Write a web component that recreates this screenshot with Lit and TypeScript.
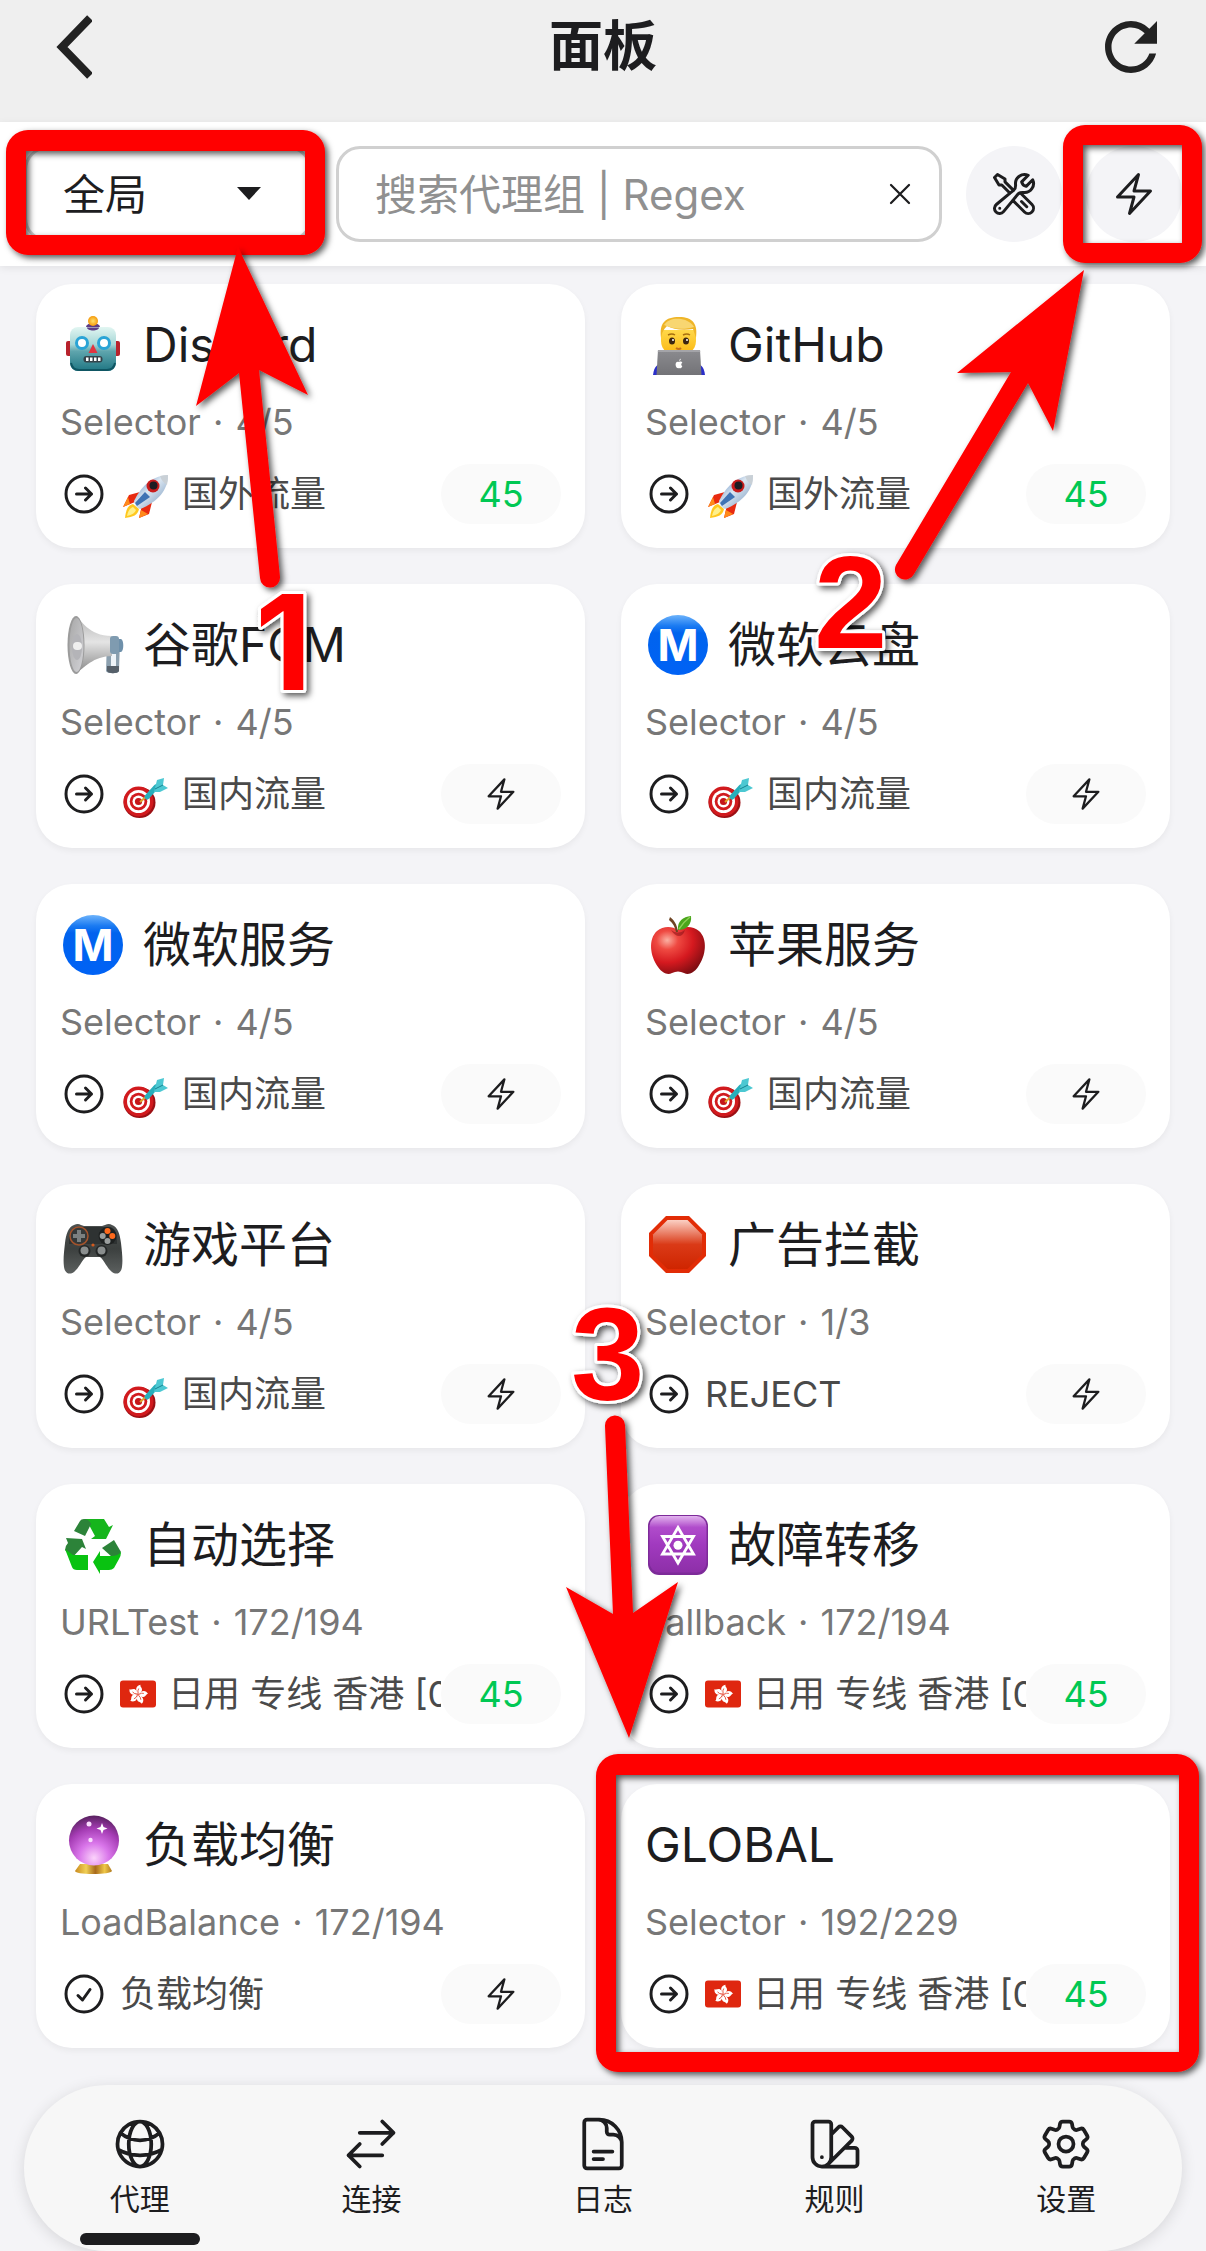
import { LitElement, html, svg, css, nothing, type TemplateResult } from "lit";
import { customElement, property } from "lit/decorators.js";

type Glyph = TemplateResult | typeof nothing;

/* ---------- outline icons, 24-unit grid ---------- */

const PATHS: Record<string, string> = {
  bolt: "m3.75 13.5 10.5-11.25L12 10.5h8.25L9.75 21.75 12 13.5H3.75Z",
  close: "M6 18 18 6M6 6l12 12",
  arrow: "m12.75 15 3-3m0 0-3-3m3 3h-7.5M21 12a9 9 0 1 1-18 0 9 9 0 0 1 18 0Z",
  check: "M9 12.75 11.25 15 15 9.75M21 12a9 9 0 1 1-18 0 9 9 0 0 1 18 0Z",
  tools:
    "M11.42 15.17 17.25 21A2.652 2.652 0 0 0 21 17.25l-5.877-5.877M11.42 15.17l2.496-3.03c.317-.384.74-.626 1.208-.766M11.42 15.17l-4.655 5.653a2.548 2.548 0 1 1-3.586-3.586l6.837-5.63m5.108-.233c.55-.164 1.163-.188 1.743-.14a4.5 4.5 0 0 0 4.486-6.336l-3.276 3.277a3.004 3.004 0 0 1-2.25-2.25l3.276-3.276a4.5 4.5 0 0 0-6.336 4.486c.091 1.076-.071 2.264-.904 2.95l-.102.085m-1.745 1.437L5.909 7.5H4.5L2.25 3.75l1.5-1.5L7.5 4.5v1.409l4.26 4.26m-1.745 1.437 1.745-1.437m6.615 8.206L15.75 15.75M4.867 19.125h.008v.008h-.008v-.008Z",
  globe:
    "M12 21a9.004 9.004 0 0 0 8.716-6.747M12 21a9.004 9.004 0 0 1-8.716-6.747M12 21c2.485 0 4.5-4.03 4.5-9S14.485 3 12 3m0 18c-2.485 0-4.5-4.03-4.5-9S9.515 3 12 3m0 0a8.997 8.997 0 0 1 7.843 4.582M12 3a8.997 8.997 0 0 0-7.843 4.582m15.686 0A11.953 11.953 0 0 1 12 10.5c-2.998 0-5.74-1.1-7.843-2.918m15.686 0A8.959 8.959 0 0 1 21 12c0 .778-.099 1.533-.284 2.253m0 0A17.919 17.919 0 0 1 12 16.5c-3.162 0-6.133-.815-8.716-2.247m0 0A9.015 9.015 0 0 1 3 12c0-1.605.42-3.113 1.157-4.418",
  swap: "M7.5 21 3 16.5m0 0L7.5 12M3 16.5h13.5m0-13.5L21 7.5m0 0L16.5 12M21 7.5H7.5",
  log: "M19.5 14.25v-2.625a3.375 3.375 0 0 0-3.375-3.375h-1.5A1.125 1.125 0 0 1 13.5 7.125v-1.5a3.375 3.375 0 0 0-3.375-3.375H8.25m0 12.75h7.5m-7.5 3H12M10.5 2.25H5.625c-.621 0-1.125.504-1.125 1.125v17.25c0 .621.504 1.125 1.125 1.125h12.75c.621 0 1.125-.504 1.125-1.125V11.25a9 9 0 0 0-9-9Z",
  swatch:
    "M4.098 19.902a3.75 3.75 0 0 0 5.304 0l6.401-6.402M6.75 21A3.75 3.75 0 0 1 3 17.25V4.125C3 3.504 3.504 3 4.125 3h5.25c.621 0 1.125.504 1.125 1.125v4.072M6.75 21a3.75 3.75 0 0 0 3.75-3.75V8.197M6.75 21h13.125c.621 0 1.125-.504 1.125-1.125v-5.25c0-.621-.504-1.125-1.125-1.125h-4.072M10.5 8.197l2.88-2.88c.438-.439 1.15-.439 1.59 0l3.712 3.713c.44.44.44 1.152 0 1.59l-2.879 2.88M6.75 17.25h.008v.008H6.75v-.008Z",
  cog: "M9.594 3.94c.09-.542.56-.94 1.11-.94h2.593c.55 0 1.02.398 1.11.94l.213 1.281c.063.374.313.686.645.87.074.04.147.083.22.127.325.196.72.257 1.075.124l1.217-.456a1.125 1.125 0 0 1 1.37.49l1.296 2.247a1.125 1.125 0 0 1-.26 1.431l-1.003.827c-.293.241-.438.613-.43.992a7.723 7.723 0 0 1 0 .255c-.008.378.137.75.43.991l1.004.827c.424.35.534.955.26 1.43l-1.298 2.247a1.125 1.125 0 0 1-1.369.491l-1.217-.456c-.355-.133-.75-.072-1.076.124a6.47 6.47 0 0 1-.22.128c-.331.183-.581.495-.644.869l-.213 1.281c-.09.543-.56.94-1.11.94h-2.594c-.55 0-1.019-.398-1.11-.94l-.213-1.281c-.062-.374-.312-.686-.644-.87a6.52 6.52 0 0 1-.22-.127c-.325-.196-.72-.257-1.076-.124l-1.217.456a1.125 1.125 0 0 1-1.369-.49l-1.297-2.247a1.125 1.125 0 0 1 .26-1.431l1.004-.827c.292-.24.437-.613.43-.991a6.932 6.932 0 0 1 0-.255c.007-.38-.138-.751-.43-.992l-1.004-.827a1.125 1.125 0 0 1-.26-1.43l1.297-2.247a1.125 1.125 0 0 1 1.37-.491l1.216.456c.356.133.751.072 1.076-.124.072-.044.146-.086.22-.128.332-.183.582-.495.644-.869l.214-1.28ZM15 12a3 3 0 1 1-6 0 3 3 0 0 1 6 0Z",
};

const line = (name: string, size: number) => html`<svg
  width=${size} height=${size} viewBox="0 0 24 24" fill="none" stroke="currentColor"
  stroke-width="1.5" stroke-linecap="round" stroke-linejoin="round" aria-hidden="true"
><path d=${PATHS[name]}></path></svg>`;

/* ---------- coloured glyphs in card titles, 66-unit grid ---------- */

const big = (content: unknown) =>
  html`<svg width="66" height="66" viewBox="0 0 66 66" aria-hidden="true">${content}</svg>`;

const robot = big(svg`
  <defs>
    <linearGradient id="rb" x1="0" y1="0" x2="0" y2="1">
      <stop offset="0" stop-color="#e2f6f2"></stop><stop offset=".4" stop-color="#a5d6d6"></stop>
      <stop offset=".55" stop-color="#5fa5ad"></stop><stop offset="1" stop-color="#1f7683"></stop>
    </linearGradient>
    <radialGradient id="ry"><stop offset="0" stop-color="#ffe06a"></stop><stop offset="1" stop-color="#f59a0c"></stop></radialGradient>
  </defs>
  <rect x="6" y="29" width="8" height="15" rx="2" fill="#b8222c"></rect>
  <rect x="52" y="29" width="8" height="15" rx="2" fill="#b8222c"></rect>
  <ellipse cx="33" cy="15" rx="7" ry="4" fill="#5c3c86"></ellipse>
  <circle cx="33" cy="9" r="5" fill="url(#ry)"></circle>
  <rect x="10" y="15" width="46" height="44" rx="8" fill="url(#rb)"></rect>
  <path d="M27 15.500h12c0 4-12 4-12 0Z" fill="#5c3c86"></path>
  <path d="M11 51c1 5 4 7 8 7h28c4 0 7-2 8-7" fill="none" stroke="#0f5663" stroke-width="2"></path>
  <circle cx="22" cy="31" r="5.500" fill="#fff" stroke="#2aa4d6" stroke-width="3"></circle>
  <circle cx="44" cy="31" r="5.500" fill="#fff" stroke="#2aa4d6" stroke-width="3"></circle>
  <path d="M33 32l4.500 9h-9Z" fill="#e2343f"></path>
  <rect x="23.500" y="44" width="19" height="6.500" rx="3" fill="#34434a"></rect>
  <path d="M26 45.500h2.500v3.500H26zM30 45.500h2.500v3.500H30zM34 45.500h2.500v3.500H34zM38 45.500h2.500v3.500H38z" fill="#fff"></path>`);

const coder = big(svg`
  <defs>
    <linearGradient id="cs" x1="0" y1="0" x2="0" y2="1"><stop offset="0" stop-color="#ffd84a"></stop><stop offset="1" stop-color="#fbb60d"></stop></linearGradient>
    <linearGradient id="cl" x1="0" y1="0" x2="0" y2="1"><stop offset="0" stop-color="#8b8b8f"></stop><stop offset="1" stop-color="#737377"></stop></linearGradient>
  </defs>
  <path d="M8 63c1-9 5-12 12-12h28c7 0 11 3 12 12Z" fill="#2b2fc9"></path>
  <rect x="26" y="36" width="16" height="12" fill="#eda30f"></rect>
  <path d="M16 18h35v11c0 9-8 15-17.500 15S16 38 16 29Z" fill="url(#cs)"></path>
  <path d="M16 26C14 11 20 5 34 5s19 7 17 21l-3-9c-11 2-20 0-26-3-3 3-5 6-6 12Z" fill="#efb528"></path>
  <path d="M19 13C23 7 30 6 36 7s11 4 13 8c-10 3-22 2-30-2Z" fill="#f8d671"></path>
  <ellipse cx="27" cy="29" rx="3" ry="3.500" fill="#3c2611"></ellipse><ellipse cx="41" cy="29" rx="3" ry="3.500" fill="#3c2611"></ellipse>
  <circle cx="28" cy="28" r="1" fill="#fff"></circle><circle cx="42" cy="28" r="1" fill="#fff"></circle>
  <path d="M23 23q4-2 7 0M38 23q4-2 7 0" stroke="#a8700f" stroke-width="1.500" fill="none"></path>
  <path d="M31 36q3 2 5 0" stroke="#c4701c" stroke-width="2" fill="none"></path>
  <path d="M13 38h42l1.500 25h-45Z" fill="url(#cl)"></path>
  <path d="M13 38h42l.2 2H12.800Z" fill="#a4a4a8"></path>
  <path d="M34 50c2-1 3 0 3.300.7-1.500 1-1.300 2.800 0 3.500-.8 2-2 2.500-3.300 1.800-1.300.7-2.500-.2-3.200-2-.8-3 .8-5 3.200-4ZM34 49q.2-2 2-2.500-.2 2-2 2.500Z" fill="#fff"></path>`);

const megaphone = big(svg`
  <defs>
    <linearGradient id="mg" x1="0" y1="0" x2="0" y2="1"><stop offset="0" stop-color="#b4b4b4"></stop><stop offset=".45" stop-color="#e4e4e4"></stop><stop offset="1" stop-color="#858585"></stop></linearGradient>
    <linearGradient id="mi" x1="0" y1="0" x2="1" y2="1"><stop offset="0" stop-color="#a8a8a8"></stop><stop offset="1" stop-color="#d2d2d6"></stop></linearGradient>
  </defs>
  <path d="M47 27h13l-1 32c-1 3-12 3-13 0Z" fill="#8ca0af"></path>
  <path d="M51 32h5v22h-5Z" fill="#eef4f9"></path>
  <path d="M47 54h12v5c-1 3-11 3-12 0Z" fill="#56606a"></path>
  <path d="M57 27h4c3 1 3 12 0 13h-4Z" fill="#6e90aa"></path>
  <path d="M16 4c5 3 12 20 36 20v20C34 44 23 56 16 62Z" fill="url(#mg)"></path>
  <rect x="50" y="24" width="9" height="18" rx="3" fill="#7f9bb0"></rect>
  <ellipse cx="16" cy="33" rx="8.500" ry="29" fill="#9b9b9b"></ellipse>
  <ellipse cx="16.500" cy="33" rx="7" ry="27" fill="url(#mi)"></ellipse>
  <ellipse cx="17" cy="35" rx="5" ry="13" fill="#b4b4b8"></ellipse>
  <rect x="13" y="30" width="9" height="8" rx="4" fill="#efefef"></rect>`);

const metro = big(svg`
  <defs><linearGradient id="mt" x1="0" y1="0" x2="0" y2="1"><stop offset="0" stop-color="#6db3fb"></stop><stop offset=".18" stop-color="#1b7bf2"></stop><stop offset=".3" stop-color="#0063ee"></stop><stop offset="1" stop-color="#0062f5"></stop></linearGradient></defs>
  <circle cx="33" cy="33" r="30" fill="url(#mt)"></circle>
  <text x="33" y="49" class="metro" text-anchor="middle">M</text>`);

const apple = big(svg`
  <defs><radialGradient id="ap" cx=".3" cy=".28" r=".8"><stop offset="0" stop-color="#fbb0a2"></stop><stop offset=".25" stop-color="#ef4a42"></stop><stop offset=".6" stop-color="#d5191f"></stop><stop offset="1" stop-color="#7e0d12"></stop></radialGradient></defs>
  <path d="M33 18c6-4 15-4 21 1 9 8 7 25-1 36-5 7-10 8-14 6-4-2-8-2-12 0-4 2-9 1-14-6C5 44 3 27 12 19c6-5 15-5 21-1Z" fill="url(#ap)"></path>
  <path d="M26 18q7 5 14 0-2 6-6 6t-8-6Z" fill="#8b1017" opacity=".55"></path>
  <path d="M33 20C32 12 29 8 25 5l-1 3c4 3 6 7 7 12Z" fill="#6f4423"></path>
  <path d="M33 18C32 9 38 5 46 4c1 8-4 14-13 14Z" fill="#4aa61c"></path>
  <path d="M34 17C38 11 41 8 45 5" stroke="#8ed054" stroke-width="1.500" fill="none"></path>`);

const gamepad = big(svg`
  <defs><linearGradient id="gp" x1="0" y1="0" x2="0" y2="1"><stop offset="0" stop-color="#4d5150"></stop><stop offset=".5" stop-color="#3c403f"></stop><stop offset="1" stop-color="#5c605f"></stop></linearGradient></defs>
  <path d="M14 13q4-2 7 0l3 1h18l3-1q4-2 7 0c6 2 8 10 9 18 1 9 2 17 1 24-1 7-6 8-10 5-5-4-8-12-12-15H26c-4 3-7 11-12 15-4 3-9 2-10-5-1-7 0-15 1-24 1-8 3-16 9-18Z" fill="url(#gp)"></path>
  <path d="M16 15h34c6 1 7 9 7 17H9c0-8 1-16 7-17Z" fill="#2e3232"></path>
  <circle cx="19" cy="24" r="9" fill="#343838" stroke="#a3532c" stroke-width="1.500"></circle>
  <path d="M17 18h4v4h4v4h-4v4h-4v-4h-4v-4h4Z" fill="#7b8080"></path>
  <circle cx="47.500" cy="24" r="9" fill="#1e2121"></circle>
  <circle cx="47.500" cy="19" r="3" fill="#ff6a1c"></circle><circle cx="52.300" cy="24" r="3" fill="#ff6a1c"></circle>
  <circle cx="42.700" cy="24" r="3" fill="#9a9e9e"></circle><circle cx="47.500" cy="29" r="3" fill="#9a9e9e"></circle>
  <circle cx="24.500" cy="39" r="6" fill="#232626"></circle><circle cx="24.500" cy="38.500" r="4" fill="#8a8e8e"></circle>
  <circle cx="41.500" cy="39" r="6" fill="#232626"></circle><circle cx="41.500" cy="38.500" r="4" fill="#8a8e8e"></circle>
  <circle cx="33" cy="33" r="1.600" fill="#d35a1e"></circle>`);

const stop = big(svg`
  <defs><linearGradient id="st" x1="0" y1="0" x2="0" y2="1"><stop offset="0" stop-color="#fbd0c4"></stop><stop offset=".5" stop-color="#da3a17"></stop><stop offset="1" stop-color="#cf2500"></stop></linearGradient></defs>
  <path d="M21 4h23l17 17v23L44 61H21L4 44V21Z" fill="#e22c06"></path>
  <path d="M22.500 8h20L57 22.500v20L42.500 57h-20L8 42.500v-20Z" fill="url(#st)"></path>`);

const recycle = big(svg`
  <path d="M24 7h20l5 8 4-2-7 14H31l4-3-7-13Z" fill="#16b51c"></path>
  <path d="M24 7q5 0 7 5l-6 12-11-5 6-10q1-2 4-2Z" fill="#2c8339"></path>
  <path d="M6 26l16 1 4 10-4-2-10 11-7-8q0-4 3-7Z" fill="#2c8339"></path>
  <path d="M5 37l8 6h15v15H17q-4 0-5-3Z" fill="#09c211"></path>
  <path d="M42 36l12-8 7 12q-2 7-9 5Z" fill="#2c8339"></path>
  <path d="M61 40q0 4-2 7l-5 9q-2 2-5 2h-9v4l-7-12 7-11v5h11q7 0 10-4Z" fill="#09c211"></path>`);

const star = big(svg`
  <defs><linearGradient id="sr" x1="0" y1="0" x2="0" y2="1"><stop offset="0" stop-color="#e2b4ee"></stop><stop offset=".2" stop-color="#b04ccb"></stop><stop offset=".5" stop-color="#a13abf"></stop><stop offset="1" stop-color="#8d2fa8"></stop></linearGradient></defs>
  <rect x="3" y="3" width="60" height="60" rx="11" fill="#7d2a99"></rect>
  <rect x="4.500" y="4" width="57" height="56.500" rx="10" fill="url(#sr)"></rect>
  <path d="M33 15.500 48.500 42h-31ZM33 51 17.500 24.500h31Z" fill="none" stroke="#fff" stroke-width="2.800"></path>
  <circle cx="33" cy="33.300" r="4.500" fill="#fff"></circle>`);

const crystal = big(svg`
  <defs>
    <radialGradient id="cb" cx=".5" cy=".85" r=".85"><stop offset="0" stop-color="#fbd3fb"></stop><stop offset=".35" stop-color="#d976ea"></stop><stop offset=".7" stop-color="#a53cb4"></stop><stop offset="1" stop-color="#58215f"></stop></radialGradient>
    <linearGradient id="cg" x1="0" y1="0" x2="1" y2="0"><stop offset="0" stop-color="#c98a1f"></stop><stop offset=".3" stop-color="#f0cf55"></stop><stop offset=".55" stop-color="#a86a1c"></stop><stop offset=".8" stop-color="#efc748"></stop><stop offset="1" stop-color="#b07a20"></stop></linearGradient>
  </defs>
  <path d="M20 52h28l4 7q-2 3-19 3t-18-3Z" fill="url(#cg)"></path>
  <circle cx="34" cy="28.500" r="25" fill="url(#cb)"></circle>
  <circle cx="29" cy="12" r="2.500" fill="#fbdcff"></circle><circle cx="30.500" cy="28" r="2.200" fill="#fbdcff"></circle>
  <path d="M42 11l1.500 4 4 1.500-4 1.500L42 22l-1.500-4-4-1.500 4-1.500Z" fill="#fff"></path>`);

/* ---------- coloured glyphs in the selected-node line ---------- */

const rocket = html`<svg width="50" height="48" viewBox="0 0 50 48" aria-hidden="true">${svg`
  <defs><linearGradient id="rk" x1="0" y1="0" x2="1" y2="1"><stop offset="0" stop-color="#3f74b5"></stop><stop offset=".45" stop-color="#dbe6f1"></stop><stop offset="1" stop-color="#6a8fb8"></stop></linearGradient></defs>
  <path d="M20 22 9 25 3 37l12-5ZM32 32l-3 12-10 4 3-13Z" fill="#e82a10"></path>
  <path d="M8 27 3 37l7-3ZM28 44l-9 4 2-8Z" fill="#ff8a1a"></path>
  <path d="M13 34c-5 1-7 5-8 14 8-1 13-3 14-9Z" fill="#ffc81f"></path>
  <path d="M13 37c-3 1-5 4-6 9 5-1 8-3 9-6Z" fill="#fff08a"></path>
  <path d="M48 5C35 5 22 14 14 31q0 5 6 8C38 32 48 20 48 5Z" fill="url(#rk)"></path>
  <path d="M48 5q-4 0-8 1 2 6 7 9 1-5 1-10Z" fill="#c9d0d6"></path>
  <path d="M25 22 15 33l2 3 13-9Z" fill="#3f73b4"></path>
  <circle cx="33" cy="16" r="6.500" fill="#c91c1c"></circle><circle cx="33.500" cy="15.500" r="4" fill="#1c1c22"></circle>`}</svg>`;

const dart = html`<svg width="50" height="48" viewBox="0 0 50 48" aria-hidden="true">${svg`
  <ellipse cx="19.500" cy="32.500" rx="16" ry="15.500" fill="#9c1014"></ellipse>
  <circle cx="18.500" cy="31.500" r="15" fill="#d11a1e"></circle>
  <circle cx="18.500" cy="31.500" r="11.500" fill="#fff"></circle>
  <circle cx="18.500" cy="31.500" r="8.800" fill="#d11a1e"></circle>
  <circle cx="18.500" cy="31.500" r="6" fill="#fff"></circle>
  <circle cx="18.500" cy="31.500" r="3.600" fill="#c5161b"></circle>
  <path d="M20 32 28 25" stroke="#e0a52a" stroke-width="2"></path>
  <path d="M27 27 36 17" stroke="#28aebb" stroke-width="5" stroke-linecap="round"></path>
  <path d="M35 18 37 10l7-2-1 7 5 3-8 4-6 0Z" fill="#4cc8d2"></path>
  <path d="M35 19l8-4" stroke="#188592" stroke-width="1"></path>`}</svg>`;

const PETALS = [0, 72, 144, 216, 288];
const flag = html`<svg width="36" height="28" viewBox="0 0 36 28" aria-hidden="true">${svg`
  <rect x="0" y="0.500" width="36" height="27" rx="3" fill="#df270f"></rect>
  ${PETALS.map(
    (a) => svg`<g transform="rotate(${a + 12} 18 14.500)">
      <path d="M18 14C14 11 14 6 18.500 4.500 18 6.500 21 7 21 9.500S19.500 12.500 18 14Z" fill="#fff"></path>
      <path d="M18 13.500q-1.500-2.500-.5-5" stroke="#df270f" stroke-width=".7" fill="none"></path></g>`
  )}`}</svg>`;

/* ---------- data ---------- */

interface Group {
  icon?: Glyph;
  name: string;
  kind: string;
  count: string;
  mark?: "arrow" | "check";
  nodeIcon?: Glyph;
  node: string;
  delay?: number;
}

const GROUPS: Group[] = [
  { icon: robot, name: "Discord", kind: "Selector", count: "4/5", nodeIcon: rocket, node: "国外流量", delay: 45 },
  { icon: coder, name: "GitHub", kind: "Selector", count: "4/5", nodeIcon: rocket, node: "国外流量", delay: 45 },
  { icon: megaphone, name: "谷歌FCM", kind: "Selector", count: "4/5", nodeIcon: dart, node: "国内流量" },
  { icon: metro, name: "微软云盘", kind: "Selector", count: "4/5", nodeIcon: dart, node: "国内流量" },
  { icon: metro, name: "微软服务", kind: "Selector", count: "4/5", nodeIcon: dart, node: "国内流量" },
  { icon: apple, name: "苹果服务", kind: "Selector", count: "4/5", nodeIcon: dart, node: "国内流量" },
  { icon: gamepad, name: "游戏平台", kind: "Selector", count: "4/5", nodeIcon: dart, node: "国内流量" },
  { icon: stop, name: "广告拦截", kind: "Selector", count: "1/3", node: "REJECT" },
  { icon: recycle, name: "自动选择", kind: "URLTest", count: "172/194", nodeIcon: flag, node: "日用 专线 香港 [0", delay: 45 },
  { icon: star, name: "故障转移", kind: "Fallback", count: "172/194", nodeIcon: flag, node: "日用 专线 香港 [0", delay: 45 },
  { icon: crystal, name: "负载均衡", kind: "LoadBalance", count: "172/194", mark: "check", node: "负载均衡" },
  { name: "GLOBAL", kind: "Selector", count: "192/229", nodeIcon: flag, node: "日用 专线 香港 [0", delay: 45 },
];

const TABS = [
  { icon: "globe", label: "代理" },
  { icon: "swap", label: "连接" },
  { icon: "log", label: "日志" },
  { icon: "swatch", label: "规则" },
  { icon: "cog", label: "设置" },
];

@customElement("proxy-card")
export class ProxyCard extends LitElement {
  @property({ attribute: false }) group!: Group;

  static styles = css`
    :host {
      display: block;
      min-width: 0;
    }
    * {
      box-sizing: border-box;
    }
    svg {
      display: block;
      flex: none;
    }
    .card {
      display: flex;
      flex-direction: column;
      gap: 18px;
      padding: 25px 24px 24px;
      border-radius: 36px;
      background: #fff;
      box-shadow: 0 3px 6px rgba(0, 0, 0, 0.05);
    }
    .title {
      display: flex;
      align-items: center;
      gap: 17px;
      margin: 0;
      font-size: 48px;
      font-weight: 400;
      line-height: 72px;
      white-space: nowrap;
      color: #1d1d1f;
    }
    .metro {
      font: 700 44px Inter, "Open Sans", sans-serif;
      fill: #fff;
    }
    .meta {
      margin: 0;
      font-size: 36px;
      line-height: 47px;
      white-space: nowrap;
      color: #777;
    }
    .dot {
      padding: 0 2px;
    }
    .row {
      display: flex;
      align-items: center;
      height: 60px;
      color: #1d1d1f;
    }
    .node {
      display: flex;
      flex: 1;
      align-items: center;
      gap: 12px;
      min-width: 0;
      margin-left: 12px;
      overflow: hidden;
      font-size: 36px;
      line-height: 60px;
      white-space: nowrap;
      color: #4a4a4a;
    }
    .test {
      display: flex;
      flex: none;
      align-items: center;
      justify-content: center;
      width: 120px;
      height: 60px;
      padding: 0;
      border: 0;
      border-radius: 30px;
      background: #fafafa;
      color: #1d1d1f;
      font: inherit;
      font-size: 36px;
    }
    .fast {
      color: #00c853;
    }
  `;

  render() {
    const g = this.group;
    return html`<article class="card">
      <h2 class="title">${g.icon ?? nothing}<span>${g.name}</span></h2>
      <p class="meta">${g.kind} <span class="dot">·</span> ${g.count}</p>
      <div class="row">
        ${line(g.mark ?? "arrow", 48)}
        <div class="node">${g.nodeIcon ?? nothing}<span>${g.node}</span></div>
        <button class="test ${g.delay ? "fast" : ""}" type="button" aria-label=${g.delay ?? "测速"}>
          ${g.delay ?? line("bolt", 36)}
        </button>
      </div>
    </article>`;
  }
}

@customElement("app-root")
export class AppRoot extends LitElement {
  static styles = css`
    :host {
      display: block;
      position: relative;
      overflow: hidden;
      background: #f4f4f7;
      color: #1d1d1f;
      font-family: Inter, "Noto Sans CJK SC", sans-serif;
    }
    * {
      box-sizing: border-box;
    }
    svg {
      display: block;
      flex: none;
    }
    button {
      display: flex;
      align-items: center;
      justify-content: center;
      padding: 0;
      border: 0;
      background: none;
      color: inherit;
      font: inherit;
    }
    .header {
      display: grid;
      grid-template-columns: 1fr auto 1fr;
      align-items: center;
      height: 122px;
      padding: 0 36px 28px;
      background: #efefef;
    }
    .heading {
      margin: 0;
      font-size: 54px;
      font-weight: 700;
      line-height: 72px;
    }
    .back {
      justify-self: start;
      padding: 0 20px;
    }
    .reload {
      justify-self: end;
    }
    .toolbar {
      display: flex;
      gap: 24px;
      padding: 24px;
      background: #fff;
      box-shadow: 0 2px 8px rgba(0, 0, 0, 0.08);
    }
    .mode,
    .search {
      display: flex;
      align-items: center;
      height: 96px;
      border: 3px solid #d0d0d0;
      border-radius: 24px;
      background: #fff;
      font-size: 42px;
    }
    .mode {
      flex: none;
      width: 288px;
      padding-right: 48px;
    }
    .select {
      flex: 1;
      min-width: 0;
      height: 100%;
      padding: 0 0 0 36px;
      border: 0;
      background: none;
      color: inherit;
      font: inherit;
      appearance: none;
    }
    .search {
      flex: 1;
      min-width: 0;
      padding: 0 21px 0 36px;
    }
    .field {
      flex: 1;
      min-width: 0;
      height: 100%;
      padding: 0;
      border: 0;
      outline: 0;
      background: none;
      color: inherit;
      font: inherit;
    }
    .field::placeholder {
      color: #909090;
      opacity: 1;
    }
    .round {
      flex: none;
      width: 96px;
      height: 96px;
      border-radius: 50%;
      background: #f4f4f7;
    }
    .grid {
      display: grid;
      grid-template-columns: repeat(2, minmax(0, 1fr));
      gap: 36px;
      padding: 18px 36px 37px;
    }
    .tabs {
      display: flex;
      margin: 0 24px;
      border-radius: 84px;
      background: #f7f7f7;
      box-shadow: 0 3px 15px rgba(0, 0, 0, 0.12);
    }
    .tab {
      display: flex;
      flex: 1;
      flex-direction: column;
      align-items: center;
      padding: 29px 0 6px;
      color: inherit;
      text-decoration: none;
    }
    .name {
      padding-top: 4px;
      font-size: 30px;
      line-height: 42px;
    }
    .bar {
      width: 120px;
      height: 12px;
      margin-top: 13px;
      border-radius: 6px;
    }
    .on {
      background: #1d1d1f;
    }
    .marks {
      position: absolute;
      top: 0;
      left: 0;
      width: 100%;
      pointer-events: none;
    }
    .digit {
      font: 700 132px "Liberation Sans", Arial, sans-serif;
      fill: #f00;
      stroke: #fff;
      stroke-width: 6px;
      stroke-linejoin: round;
      paint-order: stroke;
    }
    .one {
      font-family: Inter, "Open Sans", sans-serif;
    }
  `;

  private marks() {
    return html`<svg class="marks" viewBox="0 0 1206 2251" fill="#f00">
      <defs>
        <filter id="drop" x="-20%" y="-20%" width="140%" height="140%">
          <feDropShadow dx="3" dy="3" stdDeviation="3" flood-color="#000" flood-opacity=".65"></feDropShadow>
        </filter>
      </defs>
      <g filter="url(#drop)">
        <path fill-rule="evenodd" d="M28 130H303a22 22 0 0 1 22 22V233a22 22 0 0 1-22 22H28a22 22 0 0 1-22-22V152a22 22 0 0 1 22-22ZM26 151V235H305V151Z"></path>
        <path fill-rule="evenodd" d="M1085 125H1180a22 22 0 0 1 22 22V241a22 22 0 0 1-22 22H1085a22 22 0 0 1-22-22V147a22 22 0 0 1 22-22ZM1083 145V243H1182V145Z"></path>
        <path fill-rule="evenodd" d="M618 1754H1177a22 22 0 0 1 22 22V2050a22 22 0 0 1-22 22H618a22 22 0 0 1-22-22V1776a22 22 0 0 1 22-22ZM616 1775V2052H1179V1775Z"></path>
      </g>
      <g filter="url(#drop)">
        <path d="M238 247 308 395 259 370 280 577a10 10 0 0 1-20 1L239 373 196 406Z"></path>
        <path d="M1084 270 1053 431 1028 383 914 574a10 10 0 0 1-18-9L1011 372 957 373Z"></path>
        <path d="M629 1738 566 1587 613 1614 605 1426a10 10 0 0 1 20-1L633 1613 678 1582Z"></path>
      </g>
      <g filter="url(#drop)">
        <text class="digit one" x="255" y="690">1</text>
        <text class="digit" x="814" y="648">2</text>
        <text class="digit" x="571" y="1400">3</text>
      </g>
    </svg>`;
  }

  render() {
    return html`
      <header class="header">
        <button class="back" type="button" aria-label="返回">
          <svg width="36" height="64" viewBox="0 0 36 64" fill="none" stroke="#222" stroke-width="8">
            <path d="M34 3 6 32 34 61"></path>
          </svg>
        </button>
        <h1 class="heading">面板</h1>
        <button class="reload" type="button" aria-label="刷新">
          <svg width="78" height="78" viewBox="0 0 24 24" fill="#222">
            <path d="M17.650 6.350A7.958 7.958 0 0 0 12 4c-4.420 0-7.990 3.580-7.990 8s3.570 8 7.990 8c3.730 0 6.840-2.550 7.730-6h-2.080A5.990 5.990 0 0 1 12 18c-3.310 0-6-2.690-6-6s2.690-6 6-6c1.660 0 3.140.690 4.220 1.780L13 11h7V4l-2.350 2.350z"></path>
          </svg>
        </button>
      </header>

      <div class="toolbar">
        <div class="mode">
          <select class="select" aria-label="模式">
            <option>全局</option>
          </select>
          <svg width="24" height="14" viewBox="0 0 24 14"><path d="M0 0h24L12 13Z" fill="#1d1d1f"></path></svg>
        </div>
        <div class="search">
          <input class="field" type="text" aria-label="搜索代理组" placeholder="搜索代理组 | Regex" />
          <button type="button" aria-label="清除">${line("close", 36)}</button>
        </div>
        <button class="round" type="button" aria-label="工具">${line("tools", 48)}</button>
        <button class="round" type="button" aria-label="全部测速">${line("bolt", 48)}</button>
      </div>

      <main class="grid">
        ${GROUPS.map((g) => html`<proxy-card .group=${g}></proxy-card>`)}
      </main>

      <nav class="tabs">
        ${TABS.map(
          (t, i) => html`<a class="tab" href="#${t.icon}">
            ${line(t.icon, 60)}<span class="name">${t.label}</span>
            <span class="bar ${i === 0 ? "on" : ""}"></span>
          </a>`
        )}
      </nav>

      ${this.marks()}
    `;
  }
}
